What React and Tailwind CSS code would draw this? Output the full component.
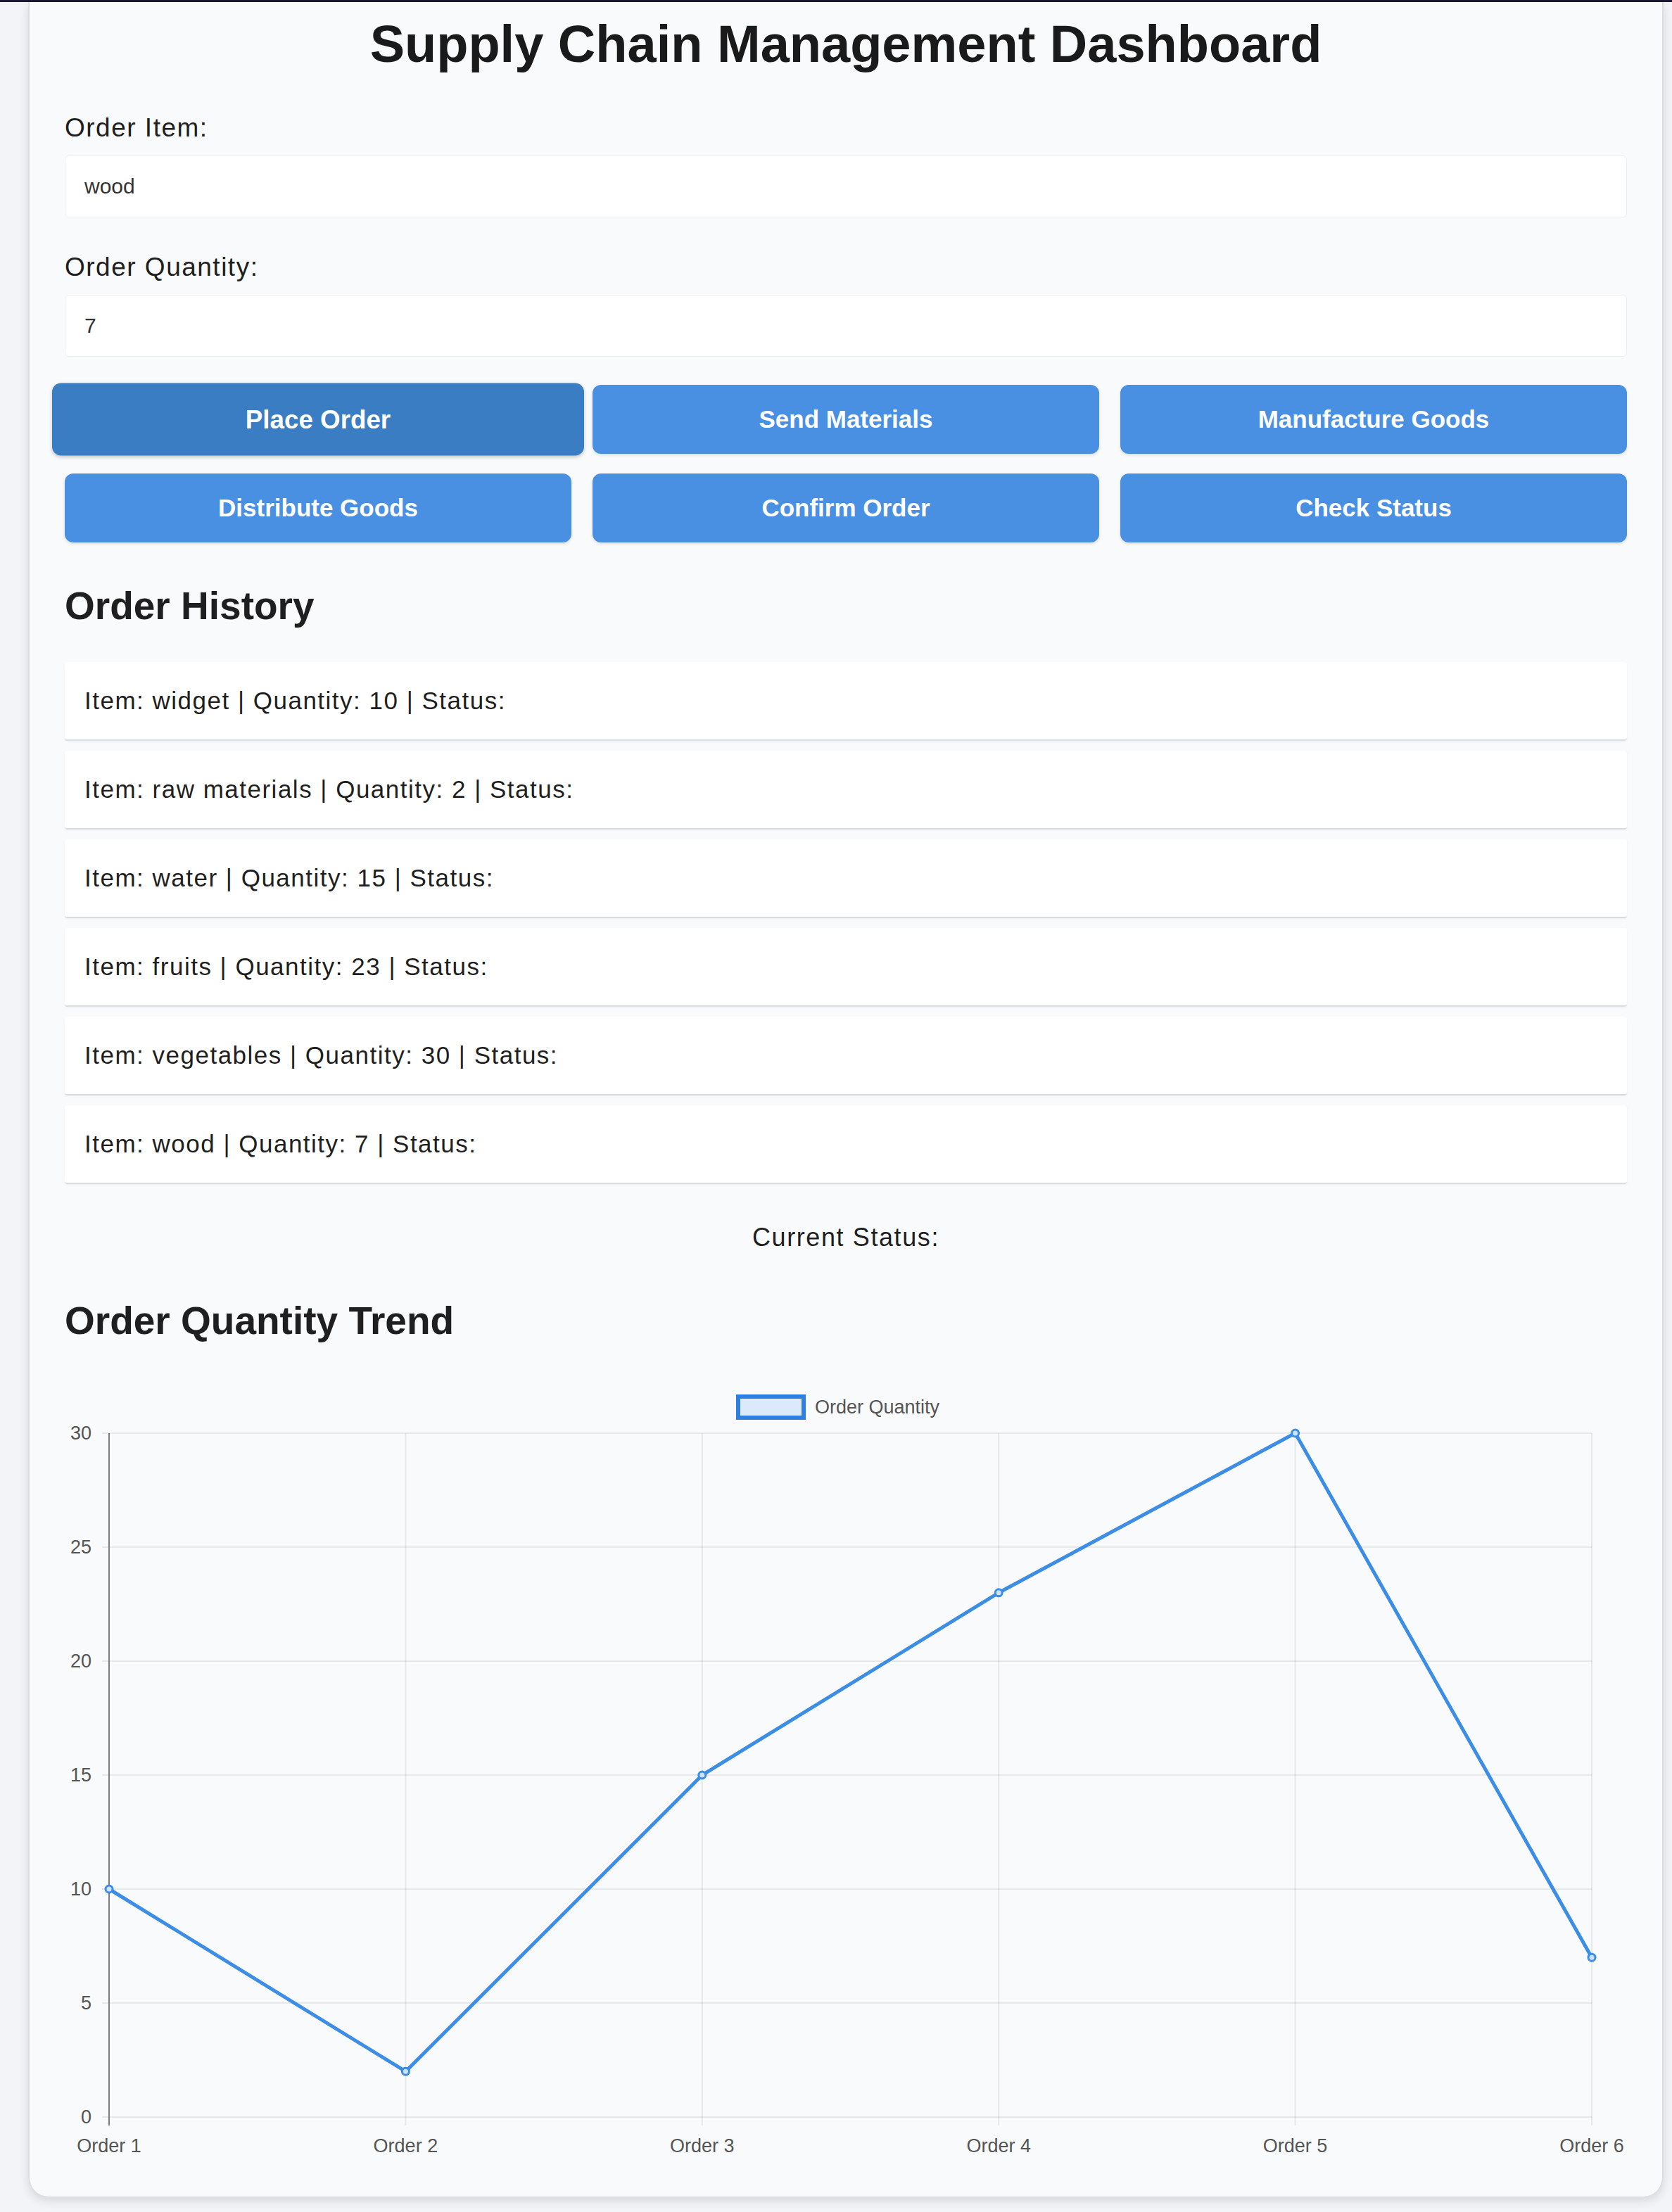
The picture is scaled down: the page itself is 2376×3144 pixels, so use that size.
import React, { useState } from 'react';

const orders = [
  { item: 'widget', quantity: 10 },
  { item: 'raw materials', quantity: 2 },
  { item: 'water', quantity: 15 },
  { item: 'fruits', quantity: 23 },
  { item: 'vegetables', quantity: 30 },
  { item: 'wood', quantity: 7 },
];

const actions = [
  'Place Order',
  'Send Materials',
  'Manufacture Goods',
  'Distribute Goods',
  'Confirm Order',
  'Check Status',
];

// Line chart drawn in plain svg (stands in for the chart.js canvas)
const OrderChart = ({ data }) => {
  const W = 2220;
  const H = 1140;
  const x0 = 63;
  const xStep = 421.4;
  const yTop = 87;
  const yBottom = 1059;
  const max = 30;
  const xAt = (i) => x0 + i * xStep;
  const yAt = (v) => yBottom - (v / max) * (yBottom - yTop);
  const ticks = [0, 5, 10, 15, 20, 25, 30];
  const points = data.map((d, i) => `${xAt(i)},${yAt(d.quantity)}`).join(' ');
  const xEnd = xAt(data.length - 1);

  return (
    <svg width={W} height={H} className="block" fontFamily="Liberation Sans, Arial, sans-serif">
      {/* Legend */}
      <rect x="957" y="35" width="93" height="30" fill="#dce9fa" stroke="#2f7fe0" strokeWidth="6" />
      <text x="1066" y="59" fontSize="27" fill="#555">Order Quantity</text>

      {/* Grid */}
      {ticks.map((t) => (
        <line key={`h${t}`} x1={x0 - 10} x2={xEnd} y1={yAt(t)} y2={yAt(t)} stroke="rgba(0,0,0,0.07)" strokeWidth="2" />
      ))}
      {data.map((d, i) => (
        <line key={`v${i}`} x1={xAt(i)} x2={xAt(i)} y1={yTop} y2={yBottom + 12} stroke="rgba(0,0,0,0.07)" strokeWidth="2" />
      ))}
      <line x1={x0} x2={x0} y1={yTop} y2={yBottom + 12} stroke="#7d7d7d" strokeWidth="2" />

      {/* Y labels */}
      {ticks.map((t) => (
        <text key={`yl${t}`} x="38" y={yAt(t) + 9} fontSize="27" fill="#555" textAnchor="end">{t}</text>
      ))}

      {/* X labels */}
      {data.map((d, i) => (
        <text key={`xl${i}`} x={xAt(i)} y="1109" fontSize="27" fill="#555" textAnchor="middle">Order {i + 1}</text>
      ))}

      {/* Data line */}
      <polyline points={points} fill="none" stroke="#3b8de6" strokeWidth="5" strokeLinejoin="round" />
      {data.map((d, i) => (
        <circle key={`p${i}`} cx={xAt(i)} cy={yAt(d.quantity)} r="5" fill="#cfe2f8" stroke="#3b8de6" strokeWidth="3" />
      ))}
    </svg>
  );
};

const App = () => {
  const [item, setItem] = useState('wood');
  const [quantity, setQuantity] = useState('7');

  return (
    <div className="min-h-screen bg-[#f3f4f7] border-t-[3px] border-[#1b1830] font-[Liberation_Sans,Arial,sans-serif] text-[#1f1f1f]">
      <div className="ml-[40px] mr-[12px] bg-[#f9fafc] border-x-2 border-[#dcdde3] rounded-b-[28px] shadow-[0_6px_14px_rgba(0,0,0,0.12)] pl-[50px] pr-[50px] pt-[10px] pb-[32px]">
        {/* Header */}
        <h1 className="h-[100px] leading-[100px] text-[74px] font-bold text-center text-[#1a1a1a]">
          Supply Chain Management Dashboard
        </h1>

        {/* Form */}
        <div className="mt-[49px]">
          <label className="block h-[40px] leading-[40px] text-[37px] tracking-[1.5px] mb-[19px]">Order Item:</label>
          <input
            type="text"
            value={item}
            onChange={(e) => setItem(e.target.value)}
            className="block w-full h-[88px] px-[27px] bg-white border border-[#eceef2] rounded-[6px] text-[30px] text-[#333] outline-none"
          />
        </div>
        <div className="mt-[51px]">
          <label className="block h-[40px] leading-[40px] text-[37px] tracking-[1.5px] mb-[19px]">Order Quantity:</label>
          <input
            type="number"
            value={quantity}
            onChange={(e) => setQuantity(e.target.value)}
            className="block w-full h-[88px] px-[27px] bg-white border border-[#eceef2] rounded-[6px] text-[30px] text-[#333] outline-none"
          />
        </div>

        {/* Actions */}
        <div className="mt-[40px] grid grid-cols-3 gap-x-[30px] gap-y-[28px]">
          {actions.map((label, i) => (
            <button
              key={label}
              className={
                i === 0
                  ? 'h-[98px] rounded-[12px] bg-[#3a7dc2] text-white text-[35px] font-bold scale-105 shadow-[0_2px_5px_rgba(0,0,0,0.2)]'
                  : 'h-[98px] rounded-[12px] bg-[#4a90e2] text-white text-[35px] font-bold shadow-[0_2px_4px_rgba(0,0,0,0.12)]'
              }
            >
              {label}
            </button>
          ))}
        </div>

        {/* Order History */}
        <h2 className="mt-[60px] h-[60px] leading-[60px] text-[55px] font-bold">Order History</h2>
        <ul className="mt-[50px] flex flex-col gap-[14px]">
          {orders.map((o) => (
            <li
              key={o.item}
              className="h-[112px] flex items-center px-[28px] bg-white border-b-2 border-[#d9dce2] rounded-[4px] shadow-[0_1px_3px_rgba(0,0,0,0.05)] text-[35px] tracking-[1.5px]"
            >
              Item: {o.item} | Quantity: {o.quantity} | Status:
            </li>
          ))}
        </ul>

        <p className="mt-[56px] h-[40px] leading-[40px] text-[36px] tracking-[1.6px] text-center">Current Status:</p>

        {/* Chart */}
        <h2 className="mt-[68px] h-[60px] leading-[60px] text-[55px] font-bold">Order Quantity Trend</h2>
        <div className="mt-[43px]">
          <OrderChart data={orders} />
        </div>
      </div>
    </div>
  );
};

export default App;
